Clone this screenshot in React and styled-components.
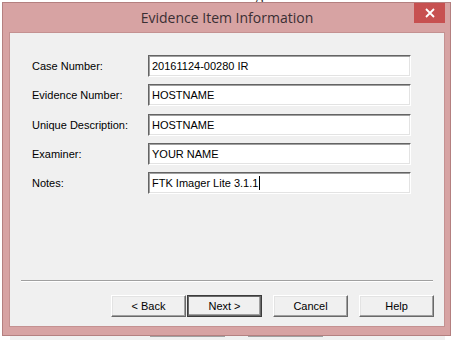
import React from 'react'
import styled, { createGlobalStyle } from 'styled-components'

const GlobalStyle = createGlobalStyle`
    html, body {
        margin: 0;
        padding: 0;
        background: #ffffff;
        overflow: hidden;
    }
`

const fields = [
    { label: 'Case Number:', value: '20161124-00280 IR' },
    { label: 'Evidence Number:', value: 'HOSTNAME' },
    { label: 'Unique Description:', value: 'HOSTNAME' },
    { label: 'Examiner:', value: 'YOUR NAME' },
    { label: 'Notes:', value: 'FTK Imager Lite 3.1.1', focused: true },
]

function App() {
    return (
        <Page>
            <GlobalStyle />
            <BackTitle>
                <span>Create Image</span>
            </BackTitle>
            <Window>
                <TitleBar>
                    <Title>Evidence Item Information</Title>
                    <CloseButton aria-label="Close">
                        <svg width="10" height="10" viewBox="0 0 10 10">
                            <path d="M1 1 L9 9 M9 1 L1 9" stroke="#ffffff" strokeWidth="1.8" />
                        </svg>
                    </CloseButton>
                </TitleBar>
                <Client>
                    <Form>
                        {fields.map((f) => (
                            <Row key={f.label}>
                                <Label>{f.label}</Label>
                                <Field>
                                    {f.value}
                                    {f.focused && <Caret />}
                                </Field>
                            </Row>
                        ))}
                    </Form>
                    <Separator />
                    <Buttons>
                        <Button>&lt; Back</Button>
                        <Button $default>Next &gt;</Button>
                        <Button $spaced>Cancel</Button>
                        <Button $spaced>Help</Button>
                    </Buttons>
                </Client>
            </Window>
            <BackButtons>
                <BackButton />
                <BackButton />
            </BackButtons>
        </Page>
    )
}

export default App

const Page = styled.div`
    width: 455px;
    height: 340px;
    display: flex;
    flex-direction: column;
    background: #ffffff;
    font-family: "Liberation Sans", Arial, sans-serif;
`

const BackTitle = styled.div`
    height: 2px;
    overflow: hidden;
    display: flex;
    justify-content: center;

    span {
        margin-top: -12px;
        font-family: "Liberation Serif", serif;
        font-size: 16px;
        line-height: 14px;
        color: #333;
    }
`

const Window = styled.div`
    margin-left: 2px;
    width: 449px;
    height: 334px;
    box-sizing: border-box;
    display: flex;
    flex-direction: column;
    background: #d7a3a3;
    border: 1px solid #b48080;
    padding: 0 5px 8px 6px;
`

const TitleBar = styled.div`
    height: 29px;
    display: flex;
    align-items: center;
    justify-content: center;
    position: relative;
`

const Title = styled.div`
    font-family: "Open Sans", "Noto Sans", sans-serif;
    font-size: 14px;
    color: #3a2f33;
    margin-top: -1px;
`

const CloseButton = styled.div`
    position: absolute;
    right: 0;
    top: 0;
    width: 31px;
    height: 20px;
    background: #c75050;
    display: flex;
    align-items: center;
    justify-content: center;
`

const Client = styled.div`
    flex: 1;
    display: flex;
    flex-direction: column;
    background: #f0f0f0;
    border: 1px solid #c49191;
    box-sizing: border-box;
`

const Form = styled.div`
    display: flex;
    flex-direction: column;
    gap: 7.3px;
    padding: 22px 0 0 22px;
`

const Row = styled.div`
    display: flex;
    align-items: center;
    height: 22px;
`

const Label = styled.div`
    width: 116px;
    font-size: 11px;
    color: #000;
`

const Field = styled.div`
    width: 263px;
    height: 22px;
    box-sizing: border-box;
    display: flex;
    align-items: center;
    padding-left: 3px;
    background: #ffffff;
    border-top: 1px solid #646464;
    border-left: 1px solid #646464;
    border-right: 1px solid #ffffff;
    border-bottom: 1px solid #ffffff;
    box-shadow: inset 1px 1px 0 #a0a0a0, inset -1px -1px 0 #e3e3e3;
    font-size: 11px;
    color: #000;
    white-space: pre;
`

const Caret = styled.span`
    display: inline-block;
    width: 1px;
    height: 14px;
    background: #000;
    margin-left: 1px;
`

const Separator = styled.div`
    margin: auto 11px 0 11px;
    height: 1px;
    background: #a0a0a0;
    border-bottom: 1px solid #ffffff;
`

const Buttons = styled.div`
    display: flex;
    justify-content: flex-end;
    padding: 13px 10px 9px 0;
`

const Button = styled.div`
    width: 75px;
    height: 22px;
    box-sizing: border-box;
    display: flex;
    align-items: center;
    justify-content: center;
    margin-left: ${(p) => (p.$spaced ? '11px' : p.$default ? '1px' : '0')};
    background: #f0f0f0;
    font-size: 11px;
    color: #000;
    border-top: 1px solid #ffffff;
    border-left: 1px solid #ffffff;
    border-right: 1px solid #696969;
    border-bottom: 1px solid #696969;
    box-shadow: ${(p) =>
        p.$default
            ? 'inset 0 0 0 1px #696969, inset -2px -2px 0 #a0a0a0'
            : 'inset -1px -1px 0 #a0a0a0, inset 1px 1px 0 #e3e3e3'};
    ${(p) => p.$default && 'border: 1px solid #3c3c3c;'}
`

const BackButtons = styled.div`
    flex: 1;
    display: flex;
    gap: 23px;
    padding-left: 140px;
    background: #f0f0f0;
    margin: 0 10px;
`

const BackButton = styled.div`
    width: 75px;
    background: #a0a0a0;
    height: 1px;
`
